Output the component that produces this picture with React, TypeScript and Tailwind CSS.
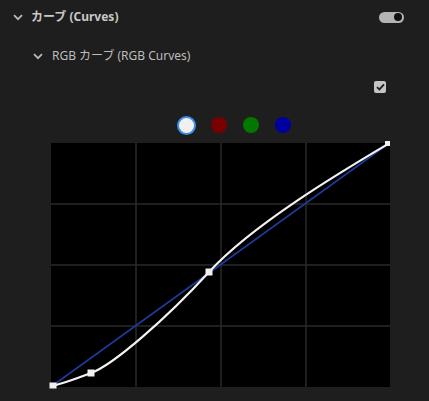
import React from "react";

const Chevron = ({ className = "" }: { className?: string }) => (
  <svg width="10" height="7" viewBox="0 0 10 7" className={className}>
    <path d="M1 1.2 L5 5.2 L9 1.2" fill="none" stroke="#b8b8b8" strokeWidth="1.8" />
  </svg>
);

export default function App() {
  const font = { fontFamily: '"Noto Sans", "Noto Sans CJK JP", sans-serif' };
  return (
    <div className="w-[429px] h-[401px] bg-[#1e1e1e] overflow-hidden flex flex-col" style={font}>
      <div className="h-[34px] flex items-center pl-[13px] pr-[25px]">
        <Chevron />
        <span className="ml-[8px] text-[12px] font-bold text-[#c8c8c8] leading-none">カーブ (Curves)</span>
        <div className="ml-auto w-[25px] h-[11px] rounded-full bg-[#b4b4b4] flex items-center justify-end pr-[2px]">
          <div className="w-[8px] h-[8px] rounded-full bg-[#111]" />
        </div>
      </div>
      <div className="mt-[5px] h-[34px] flex items-center pl-[33px]">
        <Chevron />
        <span className="ml-[9px] text-[12px] text-[#bcbcbc] leading-none">RGB カーブ (RGB Curves)</span>
      </div>
      <div className="mt-[8px] flex justify-end pr-[43px]">
        <div className="w-[12px] h-[12px] rounded-[2px] bg-[#c4c4c4] flex items-center justify-center">
          <svg width="9" height="8" viewBox="0 0 9 8">
            <path d="M1 4.2 L3.4 6.4 L8 1.4" fill="none" stroke="#1e1e1e" strokeWidth="1.8" />
          </svg>
        </div>
      </div>
      <div className="mt-[22px] h-[20px] flex items-center gap-[14px] pl-[177px]">
        <div className="w-[19px] h-[19px] rounded-full bg-[#f0f0f0] border-2 border-[#3d8fe8]" />
        <div className="w-[16px] h-[16px] rounded-full bg-[#7a0000] mx-[1px]" />
        <div className="w-[16px] h-[16px] rounded-full bg-[#007800] mx-[1px]" />
        <div className="w-[16px] h-[16px] rounded-full bg-[#0000a0] mx-[1px]" />
      </div>
      <div className="mt-[8px] ml-[51px] w-[339px] h-[244px] bg-black relative">
        <svg width="339" height="244" viewBox="0 0 339 244" className="absolute inset-0 overflow-visible">
          <g stroke="#2a2a2a" strokeWidth="1.5">
            <line x1="85" y1="0" x2="85" y2="244" />
            <line x1="170" y1="0" x2="170" y2="244" />
            <line x1="255" y1="0" x2="255" y2="244" />
            <line x1="0" y1="61" x2="339" y2="61" />
            <line x1="0" y1="122" x2="339" y2="122" />
            <line x1="0" y1="183" x2="339" y2="183" />
          </g>
          <line x1="1" y1="243" x2="337" y2="1" stroke="#1e3a9a" strokeWidth="1.6" />
          <path
            d="M1 243 C14 240 27 235 40 230 C62 222 115 176 158 129 C203 80 295 26 337 1"
            fill="none"
            stroke="#f2f2f2"
            strokeWidth="2.2"
          />
          <rect x="-1.5" y="239.5" width="7" height="6" fill="#f0f0f0" />
          <rect x="36.5" y="226.5" width="7" height="7" fill="#f0f0f0" />
          <rect x="154.5" y="125.5" width="7" height="7" fill="#f0f0f0" />
          <rect x="334" y="-2" width="5" height="5" fill="#f0f0f0" />
        </svg>
      </div>
    </div>
  );
}
